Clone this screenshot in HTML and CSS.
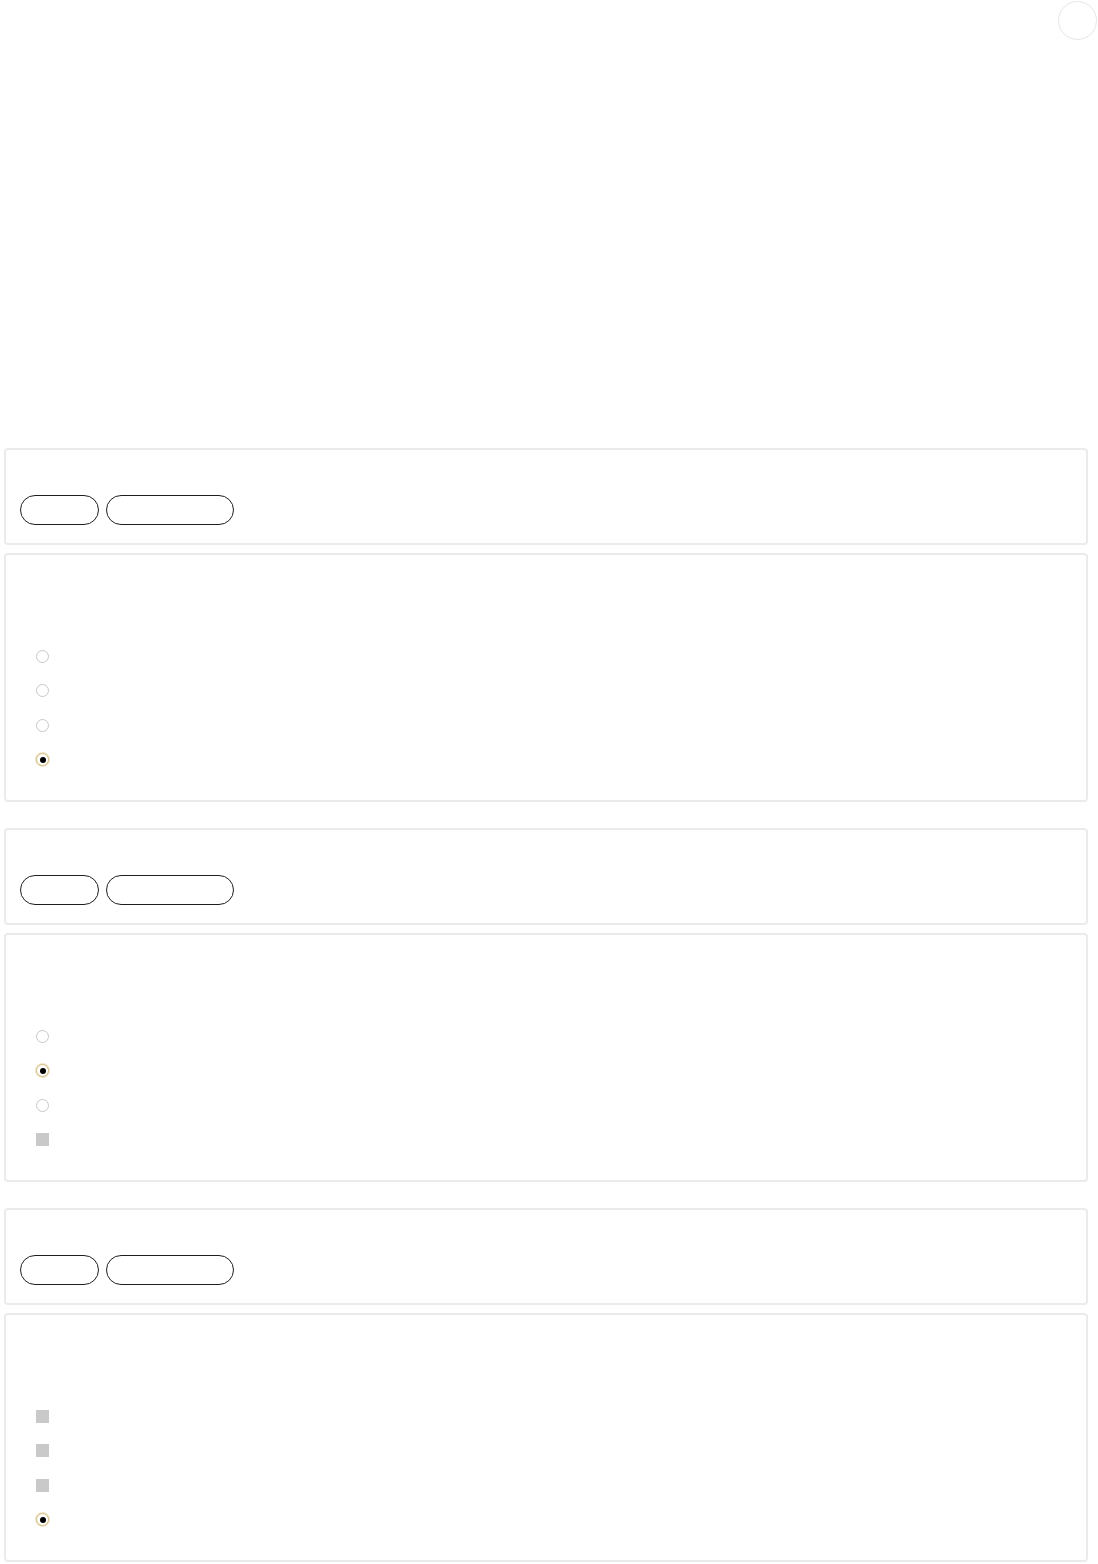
FILE: index.html
```html
<!DOCTYPE html>
<html lang="en">
<head>
<meta charset="utf-8">
<title>Quiz</title>
<link rel="stylesheet" href="styles.css">
</head>
<body>
<header class="top">
  <div class="avatar"></div>
</header>
<main class="quiz">
  <section class="question">
    <div class="card head">
      <div class="pills">
        <span class="pill pill-short"></span>
        <span class="pill pill-long"></span>
      </div>
    </div>
    <div class="card body">
      <ul class="options">
        <li class="option"><span class="radio"></span></li>
        <li class="option"><span class="radio"></span></li>
        <li class="option"><span class="radio"></span></li>
        <li class="option"><span class="radio checked"></span></li>
      </ul>
    </div>
  </section>
  <section class="question">
    <div class="card head">
      <div class="pills">
        <span class="pill pill-short"></span>
        <span class="pill pill-long"></span>
      </div>
    </div>
    <div class="card body">
      <ul class="options">
        <li class="option"><span class="radio"></span></li>
        <li class="option"><span class="radio checked"></span></li>
        <li class="option"><span class="radio"></span></li>
        <li class="option"><span class="box"></span></li>
      </ul>
    </div>
  </section>
  <section class="question">
    <div class="card head">
      <div class="pills">
        <span class="pill pill-short"></span>
        <span class="pill pill-long"></span>
      </div>
    </div>
    <div class="card body">
      <ul class="options">
        <li class="option"><span class="box"></span></li>
        <li class="option"><span class="box"></span></li>
        <li class="option"><span class="box"></span></li>
        <li class="option"><span class="radio checked"></span></li>
      </ul>
    </div>
  </section>
</main>
</body>
</html>
```

FILE: styles.css
```css
* { box-sizing: border-box; }

html, body {
  margin: 0;
  padding: 0;
  background: #fff;
  font-family: "Liberation Sans", Arial, sans-serif;
}

.top {
  height: 448px;
  display: flex;
  justify-content: flex-end;
  align-items: flex-start;
  padding: 1px 1px 0 0;
}

.avatar {
  width: 39px;
  height: 39px;
  border: 1px solid #e6e6e6;
  border-radius: 50%;
  background: #fff;
}

.quiz {
  display: flex;
  flex-direction: column;
  gap: 26px;
  padding: 0 10px 2px 4px;
}

.question {
  display: flex;
  flex-direction: column;
  gap: 8px;
}

.card {
  border: 2px solid #ebebeb;
  border-radius: 4px;
  background: #fff;
}

.head {
  height: 97px;
  padding: 45px 14px 0 14px;
}

.pills {
  display: flex;
  gap: 7px;
}

.pill {
  display: block;
  height: 30px;
  border: 1px solid #1e1e1e;
  border-radius: 15px;
}

.pill-short { width: 79px; }
.pill-long { width: 128px; }

.body {
  height: 249px;
  padding: 84px 0 0 30px;
}

.options {
  list-style: none;
  margin: 0;
  padding: 0;
}

.option {
  height: 34.5px;
  display: flex;
  align-items: center;
}

.radio {
  width: 13px;
  height: 13px;
  border: 1px solid #c8c8c8;
  border-radius: 50%;
  background: #fff;
  display: flex;
  align-items: center;
  justify-content: center;
}

.radio.checked {
  border-color: #d3bb80;
  box-shadow: 0 0 0 1px #f1e6c8;
}

.radio.checked::after {
  content: "";
  width: 6px;
  height: 6px;
  border-radius: 50%;
  background: #000;
}

.box {
  width: 13px;
  height: 13px;
  background: #c9c9c9;
}
```
